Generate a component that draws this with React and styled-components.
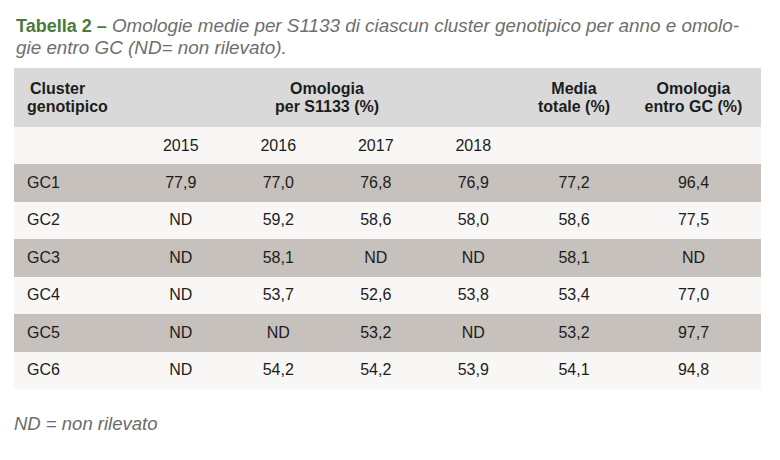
import React from "react";
import styled, { createGlobalStyle } from "styled-components";

const Global = createGlobalStyle`
  html, body { margin: 0; padding: 0; background: #ffffff; }
  body { font-family: "Liberation Sans", Arial, sans-serif; }
`;

const Page = styled.div`
  width: 780px;
  height: 460px;
  padding: 15px 0 0 14px;
  box-sizing: border-box;
  display: flex;
  flex-direction: column;
`;

const Caption = styled.div`
  font-size: 18.85px;
  line-height: 22px;
  padding-left: 2px;
  color: #6e6e6e;
  font-style: italic;
`;

const Label = styled.span`
  font-style: normal;
  font-weight: bold;
  font-size: 18px;
  color: #4a7b3c;
`;

const Table = styled.table`
  margin-top: 9px;
  width: 747px;
  border-collapse: collapse;
  table-layout: fixed;
  font-size: 16px;
  color: #1c1c1c;
`;

const Head = styled.tr`
  background: #d9d9d9;
  height: 59px;
`;

const Th = styled.th`
  font-weight: bold;
  font-size: 16px;
  line-height: 18px;
  padding: 0;
  text-align: ${(p) => (p.$left ? "left" : "center")};
  padding-left: ${(p) => (p.$left ? "13px" : "0")};
  text-indent: ${(p) => (p.$left ? "3px" : "0")};
  vertical-align: middle;
`;

const Row = styled.tr`
  background: ${(p) => (p.$shade ? "#c6c1bd" : "#f8f7f6")};
  height: ${(p) => (p.$years ? "37px" : "37.5px")};
`;

const Td = styled.td`
  padding: 0;
  padding-left: ${(p) => (p.$left ? "13px" : "0")};
  text-align: ${(p) => (p.$left ? "left" : "center")};
  vertical-align: middle;
  line-height: 18px;
`;

const Note = styled.div`
  margin-top: 24px;
  font-size: 18.5px;
  line-height: 22px;
  font-style: italic;
  color: #6b6b6b;
`;

const rows = [
  ["GC1", "77,9", "77,0", "76,8", "76,9", "77,2", "96,4"],
  ["GC2", "ND", "59,2", "58,6", "58,0", "58,6", "77,5"],
  ["GC3", "ND", "58,1", "ND", "ND", "58,1", "ND"],
  ["GC4", "ND", "53,7", "52,6", "53,8", "53,4", "77,0"],
  ["GC5", "ND", "ND", "53,2", "ND", "53,2", "97,7"],
  ["GC6", "ND", "54,2", "54,2", "53,9", "54,1", "94,8"],
];

export default function App() {
  return (
    <Page>
      <Global />
      <Caption>
        <Label>Tabella 2 –</Label> Omologie medie per S1133 di ciascun cluster genotipico per anno e omolo-
        <br />
        gie entro GC (ND= non rilevato).
      </Caption>
      <Table>
        <colgroup>
          <col style={{ width: "118px" }} />
          <col style={{ width: "97.5px" }} />
          <col style={{ width: "97.5px" }} />
          <col style={{ width: "97.5px" }} />
          <col style={{ width: "97.5px" }} />
          <col style={{ width: "104px" }} />
          <col style={{ width: "135px" }} />
        </colgroup>
        <thead>
          <Head>
            <Th $left>
              Cluster
              <br />
              genotipico
            </Th>
            <Th colSpan={4}>
              Omologia
              <br />
              per S1133 (%)
            </Th>
            <Th>
              Media
              <br />
              totale (%)
            </Th>
            <Th>
              Omologia
              <br />
              entro GC (%)
            </Th>
          </Head>
        </thead>
        <tbody>
          <Row $years>
            <Td $left></Td>
            <Td>2015</Td>
            <Td>2016</Td>
            <Td>2017</Td>
            <Td>2018</Td>
            <Td></Td>
            <Td></Td>
          </Row>
          {rows.map((r, i) => (
            <Row key={r[0]} $shade={i % 2 === 0}>
              {r.map((c, j) => (
                <Td key={j} $left={j === 0}>
                  {c}
                </Td>
              ))}
            </Row>
          ))}
        </tbody>
      </Table>
      <Note>ND = non rilevato</Note>
    </Page>
  );
}
